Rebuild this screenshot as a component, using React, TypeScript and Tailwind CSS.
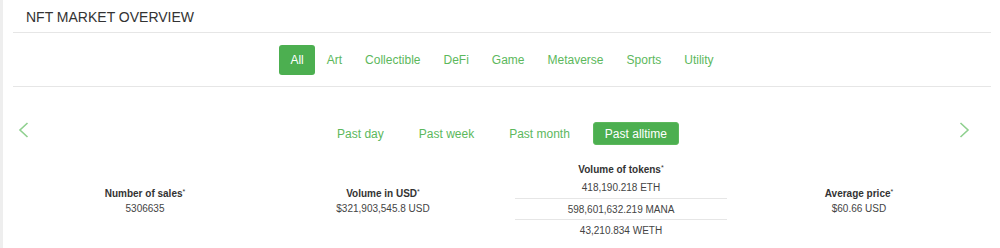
const categories = ['All', 'Art', 'Collectible', 'DeFi', 'Game', 'Metaverse', 'Sports', 'Utility']
const periods = ['Past day', 'Past week', 'Past month', 'Past alltime']

function Label({ children }: { children: string }) {
  return (
    <div className="font-bold text-[#333333]">
      {children}
      <sup className="text-[7px] font-normal">*</sup>
    </div>
  )
}

function Chevron({ dir }: { dir: 'left' | 'right' }) {
  return (
    <svg width="11" height="16" viewBox="0 0 11 16" fill="none" stroke="#8fd08f" strokeWidth={1.6}>
      {dir === 'left' ? <path d="M9.5 1 2 8l7.5 7" /> : <path d="M1.5 1 9 8l-7.5 7" />}
    </svg>
  )
}

export default function App() {
  return (
    <div className="flex min-h-[248px] bg-white font-['Liberation_Sans',Arial,sans-serif]">
      <div className="w-[3px] bg-[#eeeeee]" />
      <div className="flex-1 pl-[10px] pr-[9px]">
        <div className="flex h-[32px] items-center pl-[13px] pt-[2px] text-[14px] text-[#333333]">
          NFT MARKET OVERVIEW
        </div>
        <div className="border-t border-[#e6e6e6]" />
        <div className="flex h-[53px] items-center justify-center">
          {categories.map((c, i) => (
            <button
              key={c}
              className={
                i === 0
                  ? 'rounded-[3px] bg-[#4caf50] px-[11.5px] py-[8px] text-[12px] leading-[14px] text-white'
                  : 'px-[11.5px] py-[8px] text-[12px] leading-[14px] text-[#5cb85c]'
              }
            >
              {c}
            </button>
          ))}
        </div>
        <div className="border-t border-[#e6e6e6]" />

        <div className="mt-[35px] flex items-start">
          <div className="w-[32px] pl-[5px]">
            <Chevron dir="left" />
          </div>
          <div className="flex flex-1 items-center justify-center gap-[11px]">
            {periods.map((p, i) => (
              <button
                key={p}
                className={
                  i === periods.length - 1
                    ? 'h-[23px] rounded-[3px] border border-[#5cb85c] bg-[#4caf50] px-[11px] text-[12px] text-white'
                    : 'h-[23px] px-3 text-[12px] text-[#5cb85c]'
                }
              >
                {p}
              </button>
            ))}
          </div>
          <div className="w-[32px]">
            <Chevron dir="right" />
          </div>
        </div>

        <div className="mt-[17px] grid grid-cols-4 items-center px-[13px] text-center text-[10px] leading-[15px] text-[#444444]">
          <div>
            <Label>Number of sales</Label>
            <div>5306635</div>
          </div>
          <div>
            <Label>Volume in USD</Label>
            <div>$321,903,545.8 USD</div>
          </div>
          <div>
            <Label>Volume of tokens</Label>
            <div className="mx-[13px]">
              <div className="flex h-[21px] items-center justify-center pb-[1px]">418,190.218 ETH</div>
              <div className="flex h-[21px] items-center justify-center border-t border-[#e6e6e6]">598,601,632.219 MANA</div>
              <div className="flex h-[21px] items-center justify-center border-t border-[#e6e6e6]">43,210.834 WETH</div>
            </div>
          </div>
          <div>
            <Label>Average price</Label>
            <div>$60.66 USD</div>
          </div>
        </div>
      </div>
    </div>
  )
}
